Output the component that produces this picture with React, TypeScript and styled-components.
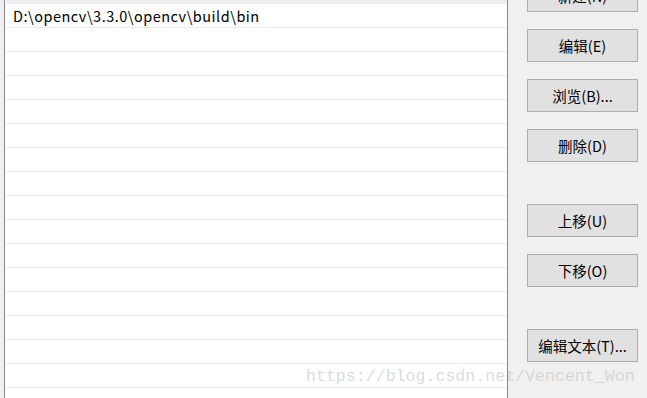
import styled, { createGlobalStyle } from "styled-components";

const GlobalStyle = createGlobalStyle`
  html, body {
    margin: 0;
    padding: 0;
    background: #f0f0f0;
    overflow: hidden;
  }
`;

const Dialog = styled.div`
  position: relative;
  display: flex;
  width: 647px;
  height: 398px;
  overflow: hidden;
  background: #f0f0f0;
  font-family: "Noto Sans CJK SC", "Noto Sans", sans-serif;
  color: #000;
`;

const ListBox = styled.div`
  margin-left: 4px;
  width: 502px;
  height: 100%;
  border-left: 1px solid #828790;
  border-right: 1px solid #828790;
  background: #fff;
  overflow: hidden;
`;

// list is scrolled, so the first row sits partly above the view
const ListInner = styled.div`
  margin-top: -20px;
`;

const Row = styled.div<{ $selected?: boolean }>`
  height: 23px;
  margin-left: 1px;
  padding-left: 7px;
  border-bottom: 1px solid #ececec;
  background: ${(p) => (p.$selected ? "#eeeeee" : "#fff")};
  font-size: 14.5px;
  letter-spacing: 0.5px;
  line-height: ${(p) => (p.$selected ? "20px" : "24px")};
  white-space: nowrap;
  overflow: hidden;
`;

const Side = styled.div`
  flex: 1;
  display: flex;
  flex-direction: column;
  gap: 17px;
  padding-left: 19px;
  margin-top: -21px;
`;

const Btn = styled.button<{ $spaced?: boolean }>`
  width: 111px;
  height: 33px;
  flex: none;
  margin-top: ${(p) => (p.$spaced ? "25px" : "0")};
  border: 1px solid #adadad;
  background: #e1e1e1;
  font-family: "Noto Sans CJK SC", "Noto Sans", sans-serif;
  font-size: 14.5px;
  color: #000;
  padding: 0;
  display: flex;
  align-items: center;
  justify-content: center;
`;

const Watermark = styled.div`
  position: absolute;
  left: 306px;
  top: 367px;
  font-family: "Liberation Mono", monospace;
  font-size: 16.6px;
  line-height: 20px;
  color: rgba(195, 195, 195, 0.6);
  white-space: nowrap;
  pointer-events: none;
`;

const rows = [
  "C:\\Windows\\Microsoft.NET\\Framework64\\v4.0.30319\\Wpp",
  "D:\\opencv\\3.3.0\\opencv\\build\\bin",
  ...Array(16).fill(""),
];

const App = () => {
  return (
    <>
      <GlobalStyle />
      <Dialog>
        <ListBox>
          <ListInner>
            {rows.map((r, i) => (
              <Row key={i} $selected={i === 0}>
                {r}
              </Row>
            ))}
          </ListInner>
        </ListBox>
        <Side>
          <Btn>新建(N)</Btn>
          <Btn>编辑(E)</Btn>
          <Btn>浏览(B)...</Btn>
          <Btn>删除(D)</Btn>
          <Btn $spaced>上移(U)</Btn>
          <Btn>下移(O)</Btn>
          <Btn $spaced>编辑文本(T)...</Btn>
        </Side>
        <Watermark>https://blog.csdn.net/Vencent_Won</Watermark>
      </Dialog>
    </>
  );
};

export default App;
